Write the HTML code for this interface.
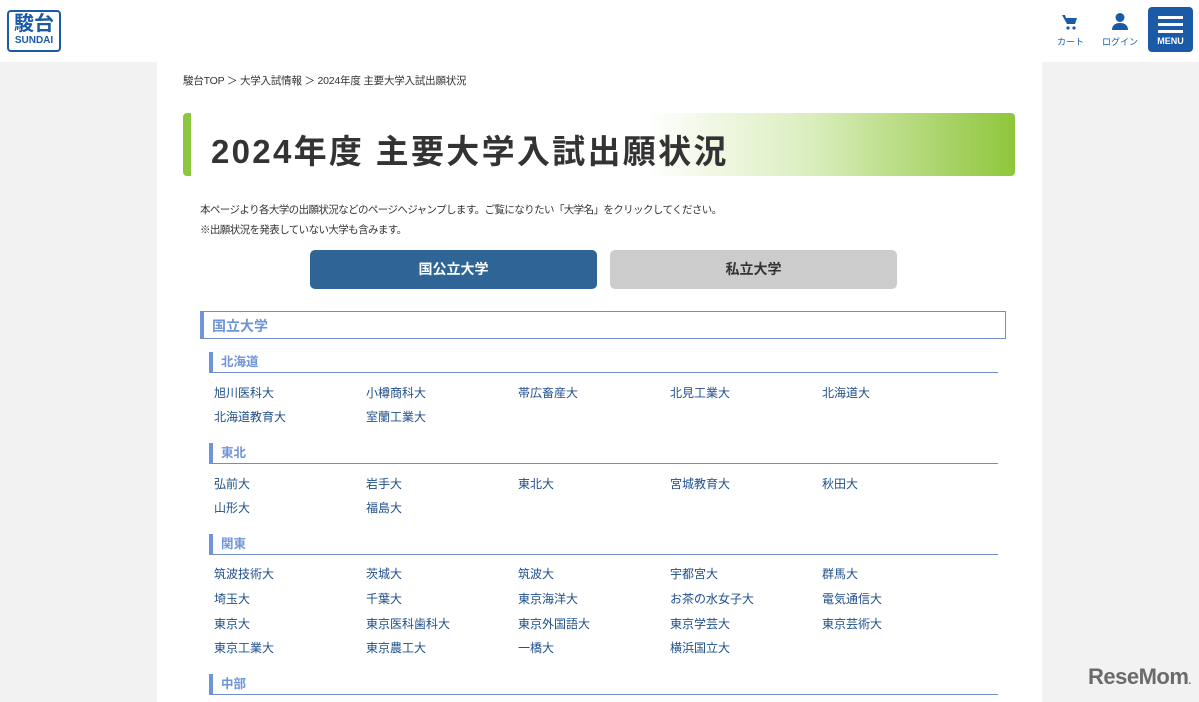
<!DOCTYPE html>
<html><head><meta charset="utf-8"><style>
*{margin:0;padding:0;box-sizing:border-box}
body{width:1199px;height:702px;overflow:hidden;background:#f2f2f2;font-family:"Liberation Sans","Noto Sans CJK JP",sans-serif;position:relative;color:#333}
.hdr{position:absolute;left:0;top:0;width:1199px;height:62px;background:#fff}
.main{position:absolute;left:157px;top:62px;width:885px;height:640px;background:#fff}
.abs{position:absolute}
.logo{left:7px;top:10px;width:54px;height:42px;border:2px solid #1a5aa6;border-radius:4px;text-align:center;color:#1a5aa6;font-weight:bold}
.title{left:183px;top:113px;width:832px;height:63px;border-radius:4px;background:linear-gradient(90deg,#fff 0%,#fff 55%,#dbeebf 75%,#8fc63c 100%);border-left:8px solid #8dc63f}
.title span{position:absolute;left:20px;top:12px;font-size:33px;font-weight:bold;color:#333;letter-spacing:2.3px}
.btn{top:250px;width:287px;height:39px;border-radius:5px;font-size:14px;font-weight:bold;text-align:center;line-height:39px}
.sec{left:200px;top:311px;width:806px;height:28px;border:1px solid #6f8fc4;border-left:4px solid #6f95d8;color:#6f95d8;font-size:14px;font-weight:bold;padding-left:8px;line-height:29px}
.sub{left:209px;width:789px;height:21px;border-bottom:1px solid #6f8fc4;border-left:4px solid #6f95d8;color:#6f95d8;font-size:12.5px;font-weight:bold;padding-left:8px;line-height:21px}
.l{position:absolute;font-size:12px;color:#1f4f8a;white-space:nowrap;margin-top:-2px}
</style></head><body>
<div class="hdr">
<div class="abs logo"><div style="font-size:20px;line-height:22px;margin-top:1px">駿台</div><div style="font-size:10px;line-height:12px">SUNDAI</div></div>
<svg class="abs" style="left:1061px;top:13px" width="18" height="18" viewBox="0 0 18 18"><path d="M1 2h3l1 3h11l-2 6H6z" fill="#1a5aa6"/><circle cx="7" cy="15" r="1.6" fill="#1a5aa6"/><circle cx="13" cy="15" r="1.6" fill="#1a5aa6"/></svg>
<div class="abs" style="left:1057px;top:35px;font-size:9px;color:#1a5aa6">カート</div>
<svg class="abs" style="left:1111px;top:12px" width="18" height="18" viewBox="0 0 18 18"><circle cx="9" cy="5.5" r="4.5" fill="#1a5aa6"/><path d="M1 18c0-5 3.5-7 8-7s8 2 8 7z" fill="#1a5aa6"/></svg>
<div class="abs" style="left:1102px;top:35px;font-size:9px;color:#1a5aa6">ログイン</div>
<div class="abs" style="left:1148px;top:7px;width:45px;height:45px;background:#1a5aa6;border-radius:4px">
<div class="abs" style="left:10px;top:9px;width:25px;height:3px;background:#fff"></div>
<div class="abs" style="left:10px;top:16px;width:25px;height:3px;background:#fff"></div>
<div class="abs" style="left:10px;top:23px;width:25px;height:3px;background:#fff"></div>
<div class="abs" style="left:0;top:29px;width:45px;text-align:center;color:#fff;font-size:9px;font-weight:bold">MENU</div></div>
</div>
<div class="main"></div>
<div class="abs" style="left:183px;top:73px;font-size:10.5px;color:#333;letter-spacing:-0.2px">駿台TOP ＞ 大学入試情報 ＞ 2024年度 主要大学入試出願状況</div>
<div class="abs title"><span>2024年度 主要大学入試出願状況</span></div>
<div class="abs" style="left:200px;top:200px;font-size:10.5px;line-height:20px;letter-spacing:-0.6px">本ページより各大学の出願状況などのページへジャンプします。ご覧になりたい「大学名」をクリックしてください。<br>※出願状況を発表していない大学も含みます。</div>
<div class="abs btn" style="left:310px;background:#2e6496;color:#fff">国公立大学</div>
<div class="abs btn" style="left:610px;background:#cccccc;color:#333">私立大学</div>
<div class="abs sec">国立大学</div>
<div class="abs sub" style="top:352px">北海道</div>
<div class="abs sub" style="top:443px">東北</div>
<div class="abs sub" style="top:534px">関東</div>
<div class="abs sub" style="top:674px">中部</div>
<div class="l" style="left:214px;top:386px">旭川医科大</div><div class="l" style="left:366px;top:386px">小樽商科大</div><div class="l" style="left:518px;top:386px">帯広畜産大</div><div class="l" style="left:670px;top:386px">北見工業大</div><div class="l" style="left:822px;top:386px">北海道大</div>
<div class="l" style="left:214px;top:410px">北海道教育大</div><div class="l" style="left:366px;top:410px">室蘭工業大</div>
<div class="l" style="left:214px;top:477px">弘前大</div><div class="l" style="left:366px;top:477px">岩手大</div><div class="l" style="left:518px;top:477px">東北大</div><div class="l" style="left:670px;top:477px">宮城教育大</div><div class="l" style="left:822px;top:477px">秋田大</div>
<div class="l" style="left:214px;top:501px">山形大</div><div class="l" style="left:366px;top:501px">福島大</div>
<div class="l" style="left:214px;top:567px">筑波技術大</div><div class="l" style="left:366px;top:567px">茨城大</div><div class="l" style="left:518px;top:567px">筑波大</div><div class="l" style="left:670px;top:567px">宇都宮大</div><div class="l" style="left:822px;top:567px">群馬大</div>
<div class="l" style="left:214px;top:592px">埼玉大</div><div class="l" style="left:366px;top:592px">千葉大</div><div class="l" style="left:518px;top:592px">東京海洋大</div><div class="l" style="left:670px;top:592px">お茶の水女子大</div><div class="l" style="left:822px;top:592px">電気通信大</div>
<div class="l" style="left:214px;top:617px">東京大</div><div class="l" style="left:366px;top:617px">東京医科歯科大</div><div class="l" style="left:518px;top:617px">東京外国語大</div><div class="l" style="left:670px;top:617px">東京学芸大</div><div class="l" style="left:822px;top:617px">東京芸術大</div>
<div class="l" style="left:214px;top:641px">東京工業大</div><div class="l" style="left:366px;top:641px">東京農工大</div><div class="l" style="left:518px;top:641px">一橋大</div><div class="l" style="left:670px;top:641px">横浜国立大</div>
<div class="abs" style="left:1088px;top:664px;font-size:22px;font-weight:bold;color:#6b6b6b;letter-spacing:-0.5px">ReseMom<span style="font-size:10px">.</span></div>
</body></html>
